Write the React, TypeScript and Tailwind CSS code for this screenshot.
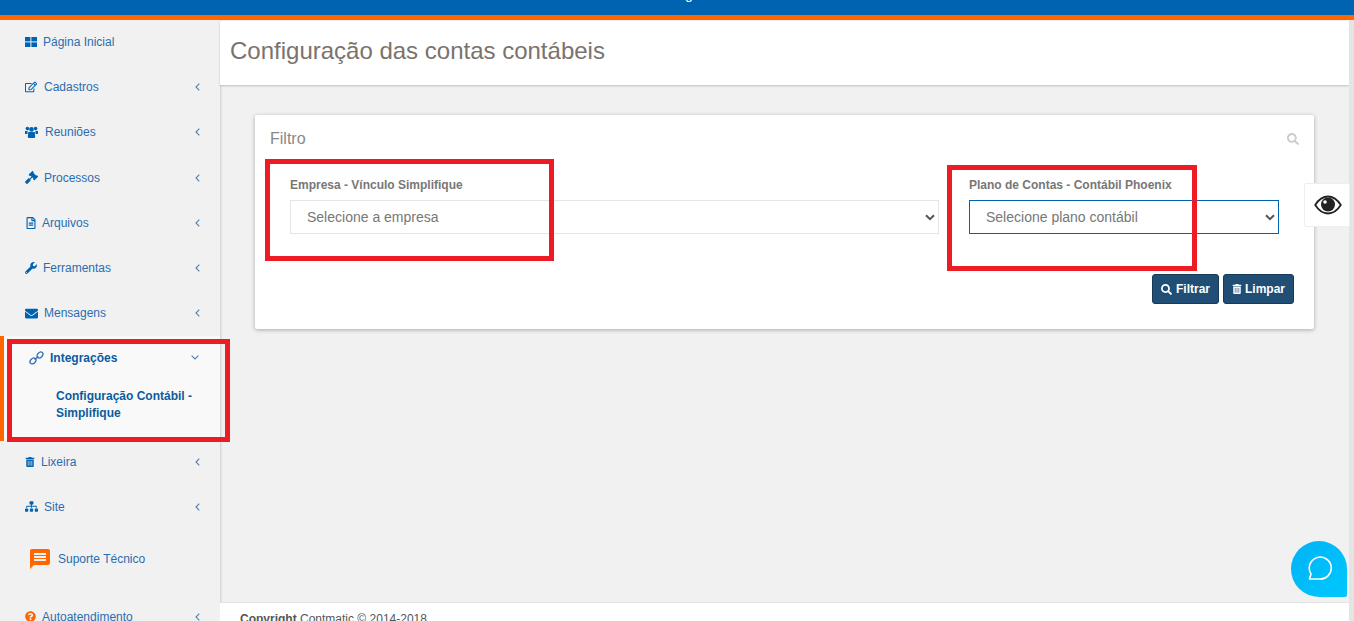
import React from "react";
import { FaRegEdit, FaGavel, FaRegFileAlt, FaWrench, FaEnvelope, FaTrashAlt, FaSitemap, FaQuestionCircle, FaSearch } from "react-icons/fa";
import { MdMessage } from "react-icons/md";

function AngleLeft() {
  return (
    <svg className="ml-auto mr-[1px]" width="5" height="8" viewBox="0 0 5 8" fill="none" stroke="#4f7fae" strokeWidth="1.1">
      <path d="M4.3 0.6 L1 4 L4.3 7.4" />
    </svg>
  );
}

function AngleDown() {
  return (
    <svg className="ml-auto mr-[2px]" width="8" height="5" viewBox="0 0 8 5" fill="none" stroke="#4f7fae" strokeWidth="1.1">
      <path d="M0.6 0.7 L4 4 L7.4 0.7" />
    </svg>
  );
}

function SelectArrow() {
  return (
    <svg width="10" height="7" viewBox="0 0 10 7" fill="none" stroke="#555555" strokeWidth="2">
      <path d="M1 1.2 L5 5.2 L9 1.2" />
    </svg>
  );
}

function GridIcon() {
  return (
    <svg width="12" height="10" viewBox="0 0 12 10" fill="currentColor">
      <rect x="0" y="0" width="5.4" height="4.4" />
      <rect x="6.4" y="0" width="5.6" height="4.4" />
      <rect x="0" y="5.4" width="5.4" height="4.6" />
      <rect x="6.4" y="5.4" width="5.6" height="4.6" />
    </svg>
  );
}

function UsersIcon() {
  return (
    <svg width="13" height="12" viewBox="0 0 13 12" fill="currentColor">
      <circle cx="2.4" cy="2.6" r="1.8" />
      <circle cx="10.6" cy="2.6" r="1.8" />
      <circle cx="6.5" cy="3.4" r="2.3" />
      <path d="M0 4.9 H2.6 L2.4 8 H0 Z" />
      <path d="M13 4.9 H10.4 L10.6 8 H13 Z" />
      <path d="M3.2 6 H9.8 L10.2 11 Q10.2 12 9 12 H4 Q2.8 12 2.8 11 Z" />
    </svg>
  );
}

function ChainIcon() {
  return (
    <svg width="15" height="14" viewBox="0 0 15 14" fill="none" stroke="#2a6db0" strokeWidth="1.3">
      <ellipse cx="4" cy="10" rx="3.4" ry="2.4" transform="rotate(-45 4 10)" />
      <ellipse cx="11" cy="4" rx="3.4" ry="2.4" transform="rotate(-45 11 4)" />
      <path d="M5.6 8.4 L9.4 5.6" />
    </svg>
  );
}

function NavItem({ label, icon, gap, h }: { label: string; icon: React.ReactNode; gap: string; h: string }) {
  return (
    <div className={`flex items-center pl-[25px] pr-[19px] text-[12px] text-[#2a6db0] ${h}`}>
      <span className="w-[13px] flex justify-start text-[#0063b1]">{icon}</span>
      <span className={gap}>{label}</span>
      <AngleLeft />
    </div>
  );
}

function Sidebar() {
  return (
    <aside className="w-[220px] h-full bg-[#f1f1f1] shadow-[1px_0_2px_rgba(0,0,0,0.15)] shrink-0 overflow-hidden">
      <div className="h-[44px] flex items-center pl-[25px] text-[12px] text-[#2a6db0]">
        <span className="w-[13px] text-[#0063b1]"><GridIcon /></span>
        <span className="ml-[5px]">Página Inicial</span>
      </div>
      <NavItem h="h-[45px]" label="Cadastros" gap="ml-[6px]" icon={<FaRegEdit size={12} />} />
      <NavItem h="h-[46px]" label="Reuniões" gap="ml-[7px]" icon={<UsersIcon />} />
      <NavItem h="h-[45px]" label="Processos" gap="ml-[6px]" icon={<FaGavel size={13} />} />
      <NavItem h="h-[45px]" label="Arquivos" gap="ml-[4px]" icon={<FaRegFileAlt size={12} />} />
      <NavItem h="h-[45px]" label="Ferramentas" gap="ml-[5px]" icon={<FaWrench size={12} />} />
      <NavItem h="h-[46px]" label="Mensagens" gap="ml-[6px]" icon={<FaEnvelope size={13} />} />
      <div className="h-[105px] bg-[#f9f9f9] border-l-[4px] border-[#ff6600]">
        <div className="h-[43px] flex items-center pl-[25px] pr-[19px] text-[12px] font-bold text-[#0b5c9e]">
          <ChainIcon />
          <span className="ml-[6px]">Integrações</span>
          <AngleDown />
        </div>
        <div className="pl-[52px] pr-[20px] mt-[9px] text-[12px] leading-[17px] font-bold text-[#0b5c9e]">
          Configuração Contábil - Simplifique
        </div>
      </div>
      <NavItem h="h-[41px]" label="Lixeira" gap="ml-[3px]" icon={<FaTrashAlt size={10} />} />
      <NavItem h="h-[49px]" label="Site" gap="ml-[6px]" icon={<FaSitemap size={13} />} />
      <div className="h-[55px] flex items-center pl-[28px] text-[12px] text-[#2a6db0]">
        <MdMessage size={24} className="text-[#ff6600]" />
        <span className="ml-[6px]">Suporte Técnico</span>
      </div>
      <NavItem h="h-[61px]" label="Autoatendimento" gap="ml-[4px]" icon={<FaQuestionCircle size={11} className="text-[#ff6600]" />} />
    </aside>
  );
}

function Field({ label, placeholder, focused, className }: { label: string; placeholder: string; focused?: boolean; className: string }) {
  return (
    <div className={className}>
      <div className="text-[12px] leading-[14px] font-bold text-[#777777] mb-[8px]">{label}</div>
      <div className={`h-[34px] flex items-center justify-between pl-[16px] pr-[3px] border text-[14px] text-[#777777] bg-white ${focused ? "border-[#0063b1]" : "border-[#e5e5e5]"}`}>
        <span>{placeholder}</span>
        <SelectArrow />
      </div>
    </div>
  );
}

function FilterCard() {
  return (
    <section className="bg-white shadow-[0_1px_4px_rgba(0,0,0,0.3)] rounded-[2px] h-[214px] pt-[13px]">
      <div className="flex items-center justify-between px-[15px]">
        <span className="text-[16px] leading-[22px] text-[#888888]">Filtro</span>
        <FaSearch size={12} className="text-[#cccccc]" />
      </div>
      <div className="flex mt-[28px] pl-[35px]">
        <Field className="w-[649px]" label="Empresa - Vínculo Simplifique" placeholder="Selecione a empresa" />
        <Field className="w-[310px] ml-[30px]" label="Plano de Contas - Contábil Phoenix" placeholder="Selecione plano contábil" focused />
      </div>
      <div className="flex justify-end gap-[4px] mt-[40px] pr-[20px]">
        <button className="w-[67px] h-[30px] flex items-center justify-center gap-[4px] rounded-[3px] bg-[#214e75] border border-[#173a58] text-white text-[12px] font-bold">
          <FaSearch size={11} />Filtrar
        </button>
        <button className="w-[71px] h-[30px] flex items-center justify-center gap-[3px] rounded-[3px] bg-[#214e75] border border-[#173a58] text-white text-[12px] font-bold">
          <FaTrashAlt size={10} />Limpar
        </button>
      </div>
    </section>
  );
}

export default function App() {
  return (
    <div className="relative w-[1354px] h-[621px] overflow-hidden bg-[#f1f1f1] font-['Liberation_Sans',Arial,sans-serif] flex flex-col">
      <header className="relative shrink-0 h-[20px] bg-[#0063b1] border-b-[5px] border-[#ff6600] overflow-hidden">
        <span className="absolute left-[685px] top-[-13px] text-[14px] leading-[14px] text-white">g</span>
      </header>
      <div className="flex flex-1 min-h-0">
        <Sidebar />
        <main className="flex-1 min-w-0 flex flex-col">
          <div className="h-[64px] shrink-0 bg-white shadow-[0_1px_2px_rgba(0,0,0,0.2)] flex items-center pl-[10px] pb-[4px] text-[24px] text-[#7a736d] mt-[1px]">
            Configuração das contas contábeis
          </div>
          <div className="flex-1 pl-[35px] pr-[35px] pt-[30px]">
            <FilterCard />
          </div>
          <footer className="h-[19px] shrink-0 bg-white border-t border-[#e3e3e3] pl-[20px] pt-[9px] text-[12px] leading-[14px] text-[#555555]">
            <b>Copyright</b> Contmatic © 2014-2018
          </footer>
        </main>
        <div className="w-[5px] bg-[#e4e4e4] shrink-0" />
      </div>

      {/* annotations and floating widgets */}
      <div className="absolute left-[7px] top-[339px] w-[223px] h-[103px] border-[5px] border-[#ed1c24]" />
      <div className="absolute left-[265px] top-[159px] w-[289px] h-[102px] border-[5px] border-[#ed1c24]" />
      <div className="absolute left-[947px] top-[165px] w-[250px] h-[106px] border-[5px] border-[#ed1c24]" />
      <div className="absolute left-[1304px] top-[183px] w-[46px] h-[44px] bg-white border border-[#eeeeee] rounded-l-[2px] flex items-center justify-center">
        <svg className="ml-[2px]" width="28" height="20" viewBox="0 0 28 20">
          <path d="M1.2 10 C5 4 9 1.5 14 1.5 C19 1.5 23 4 26.8 10 C23 16 19 18.5 14 18.5 C9 18.5 5 16 1.2 10 Z" fill="none" stroke="#222222" strokeWidth="1.8" />
          <circle cx="14" cy="9.5" r="7" fill="#222222" />
          <circle cx="11" cy="7" r="1.8" fill="#ffffff" />
        </svg>
      </div>
      <div className="absolute left-[1291px] top-[541px] w-[56px] h-[56px] rounded-[28px] rounded-br-[2px] bg-gradient-to-br from-[#00b2f5] to-[#00c8ff] flex items-center justify-center">
        <svg className="-ml-[3px] mt-[1px]" width="28" height="28" viewBox="0 0 28 28" fill="none" stroke="white" strokeWidth="1.6">
          <path d="M5.5 23 L7 18 A11 11 0 1 1 15 23 Z" strokeLinejoin="round" />
        </svg>
      </div>
    </div>
  );
}
